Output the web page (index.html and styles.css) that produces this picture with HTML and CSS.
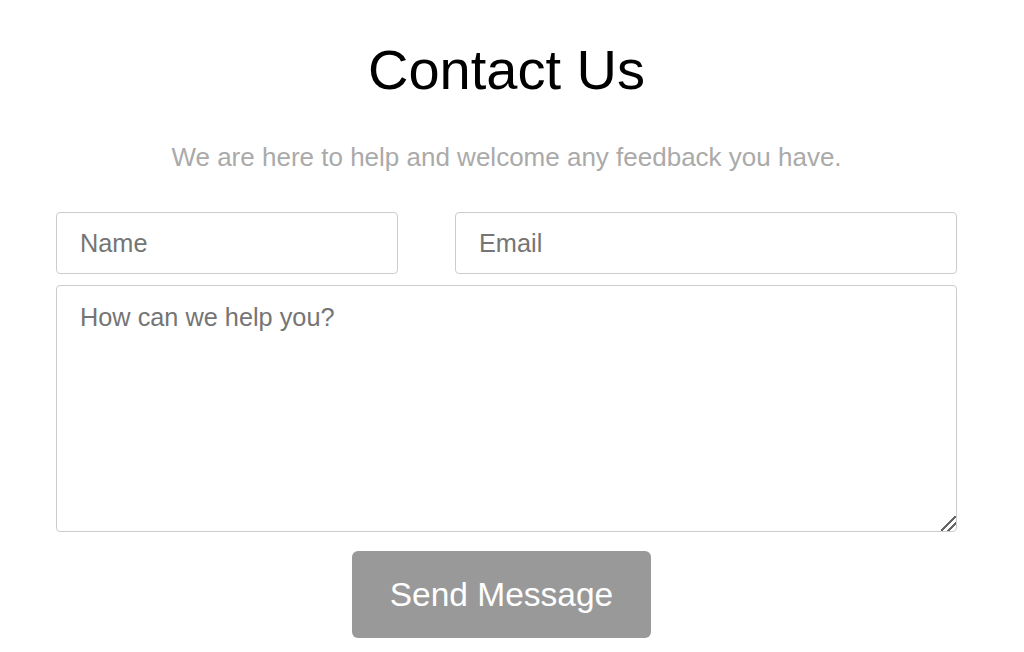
FILE: index.html
```html
<!DOCTYPE html>
<html lang="en">
<head>
<meta charset="UTF-8" />
<meta name="viewport" content="width=device-width, initial-scale=1" />
<title>Contact Us</title>
<link rel="stylesheet" href="styles.css">
</head>
<body>

<div class="contact">
  <h1>Contact Us</h1>
  <p class="lead">We are here to help and welcome any feedback you have.</p>

  <form class="contact-form">
    <div class="row">
      <input type="text" name="name" placeholder="Name" />
      <input type="email" name="email" placeholder="Email" />
    </div>
    <textarea name="message" placeholder="How can we help you?"></textarea>
    <button type="button" class="send-btn">Send Message</button>
  </form>
</div>

</body>
</html>
```

FILE: styles.css
```css
body {
  margin: 0;
  padding: 0 11px 0 0;
  font-family: "Liberation Sans", Arial, sans-serif;
  background: #fff;
}
.contact {
  width: 901px;
  margin: 0 auto;
}
h1 {
  margin: 38px 0 0 0;
  font-size: 56px;
  font-weight: normal;
  line-height: 64px;
  text-align: center;
  color: #000;
}
.lead {
  margin: 40px 0 0 0;
  font-size: 26px;
  line-height: 30px;
  color: #aaa;
  text-align: center;
}
.contact-form {
  margin-top: 40px;
}
.row {
  display: grid;
  grid-template-columns: 342px 502px;
  justify-content: space-between;
}
input, textarea {
  box-sizing: border-box;
  border: 1px solid #ccc;
  border-radius: 4px;
  font-family: inherit;
  font-size: 25.3px;
  color: #333;
  padding: 0 23px;
}
input {
  height: 62px;
}
textarea {
  display: block;
  width: 100%;
  height: 247px;
  margin-top: 11px;
  padding-top: 17px;
  padding-bottom: 17px;
}
textarea::-webkit-resizer {
  background: linear-gradient(135deg, transparent 44%, #666 44%, #666 54%, transparent 54%, transparent 68%, #666 68%, #666 78%, transparent 78%);
}
input::placeholder, textarea::placeholder {
  color: #757575;
}
.send-btn {
  display: block;
  width: 299px;
  height: 87px;
  margin: 19px 0 0 296px;
  background: #999;
  color: #fff;
  border: none;
  border-radius: 6px;
  font-family: inherit;
  font-size: 33.5px;
  cursor: pointer;
}
```
